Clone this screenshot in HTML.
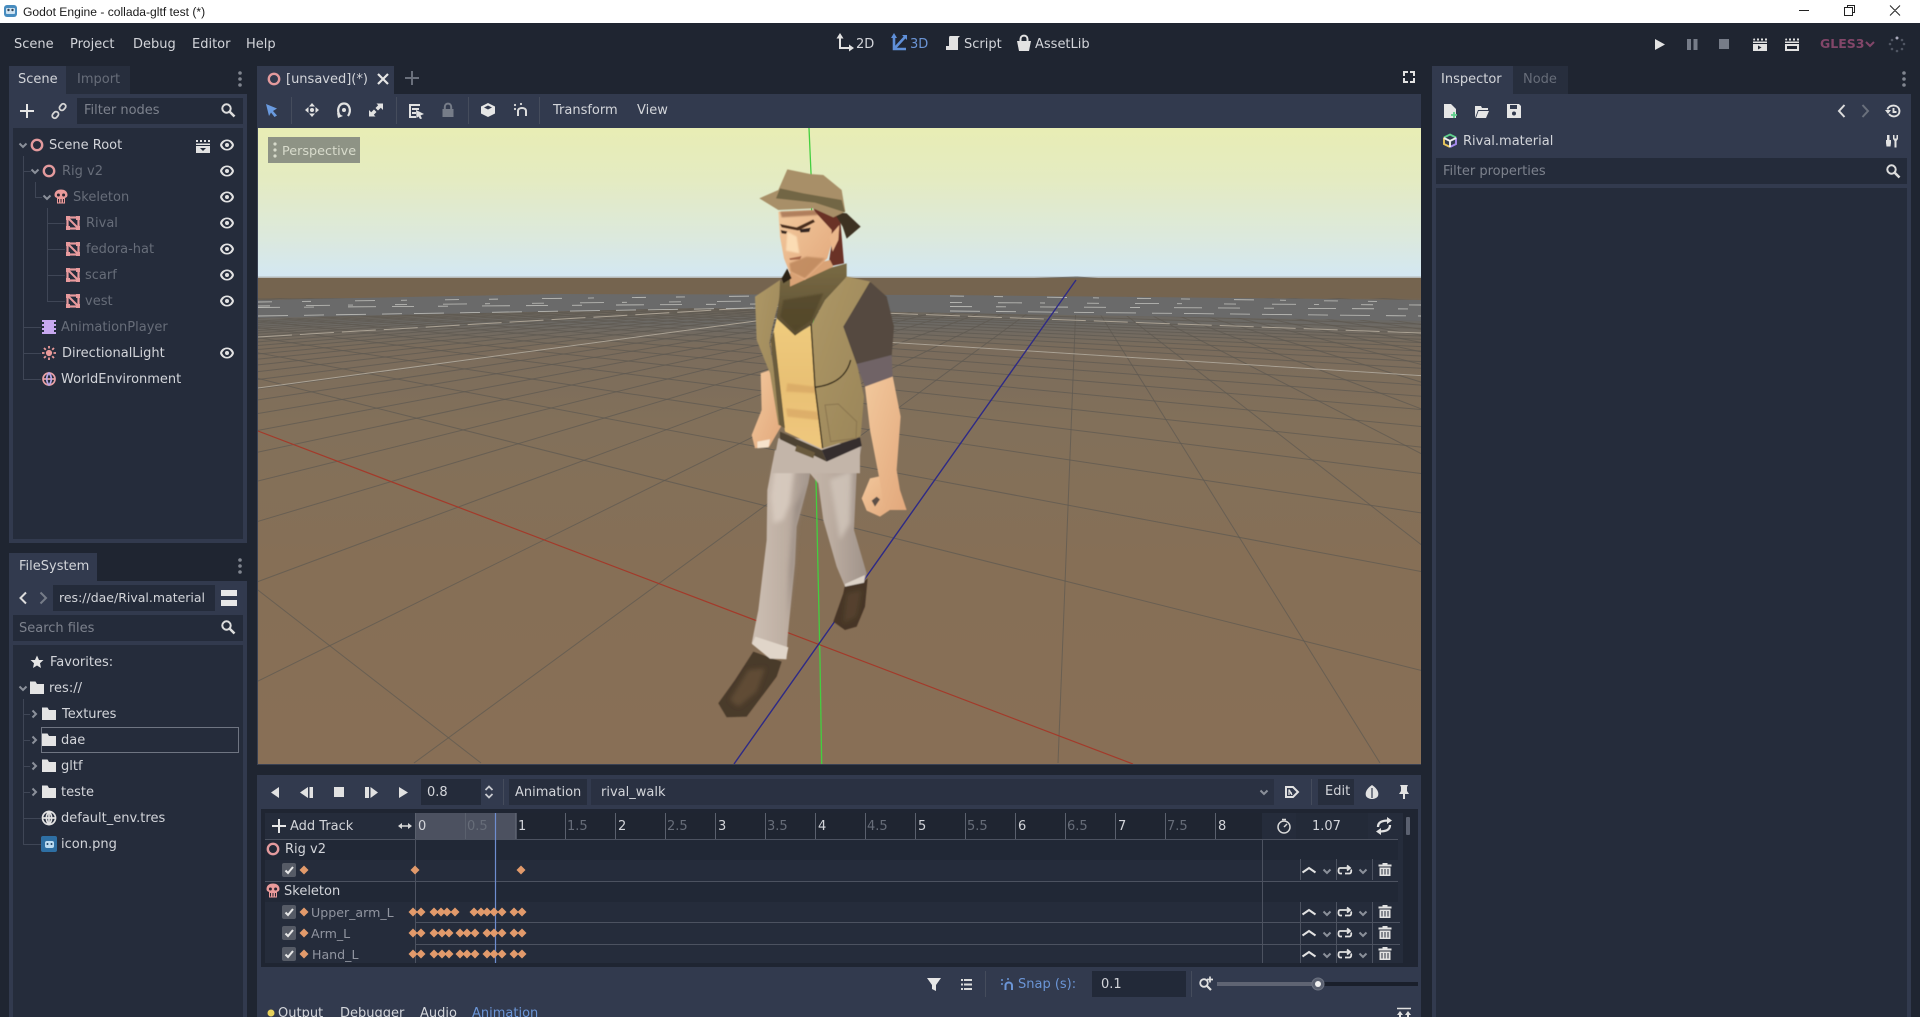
<!DOCTYPE html>
<html><head><meta charset="utf-8"><title>Godot Engine - collada-gltf test (*)</title>
<style>
html,body{margin:0;padding:0;width:1920px;height:1017px;overflow:hidden;background:#1f2531}
body{position:relative;font-family:"DejaVu Sans","Liberation Sans",sans-serif;font-size:13px;color:#d3d5da}
.b{position:absolute}
.t{position:absolute;white-space:nowrap;line-height:20px;height:20px;margin-top:1px}
.d{color:#676d79}
.p{color:#7d828d}
.h{color:#6b95d6}
svg{position:absolute;left:0;top:0}
</style></head><body>

<div class="b" style="left:0;top:0;width:1920px;height:23px;background:#fff"></div>
<span class="t" style="left:23px;top:1px;color:#1a1a1a;font-family:'Liberation Sans',sans-serif;font-size:12.1px">Godot Engine - collada-gltf test (*)</span>

<!-- left docks -->
<div class="b" style="left:9px;top:66px;width:57px;height:28px;background:#323a4e"></div>
<div class="b" style="left:66px;top:66px;width:64px;height:28px;background:#272e3d"></div>
<div class="b" style="left:9px;top:94px;width:238px;height:449px;background:#323a4e"></div>
<div class="b" style="left:77px;top:98px;width:166px;height:26px;background:#242b3a"></div>
<div class="b" style="left:13px;top:128px;width:230px;height:411px;background:#252c3b"></div>
<div class="b" style="left:9px;top:553px;width:88px;height:28px;background:#323a4e"></div>
<div class="b" style="left:9px;top:581px;width:238px;height:436px;background:#323a4e"></div>
<div class="b" style="left:53px;top:585px;width:162px;height:26px;background:#242b3a"></div>
<div class="b" style="left:13px;top:615px;width:230px;height:26px;background:#242b3a"></div>
<div class="b" style="left:13px;top:645px;width:230px;height:372px;background:#252c3b"></div>
<div class="b" style="left:41px;top:727px;width:196px;height:24px;border:1px solid #6f7582"></div>

<!-- center -->
<div class="b" style="left:257px;top:66px;width:137px;height:28px;background:#323a4e"></div>
<div class="b" style="left:257px;top:94px;width:1164px;height:34px;background:#323a4e"></div>
<div class="b" style="left:257px;top:128px;width:1164px;height:637px;background:#3a4152"></div>
<div class="b" style="left:257px;top:775px;width:1164px;height:242px;background:#323a4e"></div>
<div class="b" style="left:421px;top:779px;width:60px;height:26px;background:#242b3a"></div>
<div class="b" style="left:509px;top:779px;width:78px;height:26px;background:#272e3d"></div>
<div class="b" style="left:591px;top:779px;width:683px;height:26px;background:#2a3142"></div>
<div class="b" style="left:1318px;top:779px;width:36px;height:26px;background:#272e3d"></div>
<div class="b" style="left:261px;top:809px;width:1157px;height:158px;background:#1f2532"></div>
<div class="b" style="left:265px;top:813px;width:1138px;height:150px;background:#252c3b"></div>
<div class="b" style="left:415px;top:813px;width:847px;height:26px;background:#1f2531"></div>
<div class="b" style="left:415px;top:813px;width:102px;height:26px;background:#4c5160"></div>
<div class="b" style="left:265px;top:840px;width:1133px;height:20px;background:#212836"></div>
<div class="b" style="left:265px;top:882px;width:1133px;height:20px;background:#212836"></div>
<div class="b" style="left:1296px;top:813px;width:72px;height:26px;background:#232a38"></div>
<div class="b" style="left:1092px;top:971px;width:94px;height:26px;background:#222938"></div>

<!-- inspector -->
<div class="b" style="left:1432px;top:66px;width:81px;height:28px;background:#323a4e"></div>
<div class="b" style="left:1513px;top:66px;width:55px;height:28px;background:#272e3d"></div>
<div class="b" style="left:1432px;top:94px;width:479px;height:923px;background:#323a4e"></div>
<div class="b" style="left:1436px;top:158px;width:471px;height:26px;background:#242b3a"></div>
<div class="b" style="left:1436px;top:188px;width:471px;height:829px;background:#252c3b"></div>

<!-- 3D viewport -->
<svg width="1163" height="636" viewBox="258 128 1163 636" style="left:258px;top:128px">
<defs>
<linearGradient id="sky" x1="0" y1="0" x2="0" y2="1"><stop offset="0" stop-color="#e8edb4"/><stop offset=".35" stop-color="#e4ebc2"/><stop offset=".72" stop-color="#dce9dc"/><stop offset="1" stop-color="#d3e7f3"/></linearGradient>
<linearGradient id="gnd" x1="0" y1="0" x2="0" y2="1"><stop offset="0" stop-color="#75644f"/><stop offset=".035" stop-color="#75644f"/><stop offset=".09" stop-color="#6b6965"/><stop offset=".14" stop-color="#7a6c5c"/><stop offset=".3" stop-color="#82705a"/><stop offset=".6" stop-color="#866f56"/><stop offset="1" stop-color="#886f56"/></linearGradient>
<linearGradient id="skin" x1="0" y1="0" x2="1" y2="1"><stop offset="0" stop-color="#f2c89c"/><stop offset="1" stop-color="#e2a87c"/></linearGradient>
<linearGradient id="chest" x1="0" y1="0" x2="0" y2="1"><stop offset="0" stop-color="#efcc7e"/><stop offset=".5" stop-color="#e8c074"/><stop offset="1" stop-color="#f0c87e"/></linearGradient>
<linearGradient id="pant" x1="0" y1="0" x2="1" y2="0"><stop offset="0" stop-color="#cdbfb3"/><stop offset=".55" stop-color="#bdaea2"/><stop offset="1" stop-color="#a0938a"/></linearGradient>
<linearGradient id="vest" x1="0" y1="0" x2="1" y2="1"><stop offset="0" stop-color="#ad9766"/><stop offset="1" stop-color="#9a8558"/></linearGradient>
<linearGradient id="scarf" x1="0" y1="0" x2="0" y2="1"><stop offset="0" stop-color="#7a6b45"/><stop offset="1" stop-color="#5a4d30"/></linearGradient>
<filter id="s" x="-5%" y="-5%" width="110%" height="110%"><feGaussianBlur stdDeviation=".55"/></filter>
<filter id="s6" x="-40%" y="-40%" width="180%" height="180%"><feGaussianBlur stdDeviation="7"/></filter>
<filter id="s3" x="-40%" y="-40%" width="180%" height="180%"><feGaussianBlur stdDeviation="2.5"/></filter>
</defs>
<rect x="258" y="128" width="1163" height="150" fill="url(#sky)"/>
<rect x="258" y="278" width="1163" height="486" fill="url(#gnd)"/>
<rect x="258" y="276.5" width="1163" height="1.6" fill="#b5b8b8"/>
<!-- grid: family A -->
<path fill="none" stroke="#5f5a52" stroke-width="1" opacity=".75" d="M1077 277L1058 763M1077 277L1380 763M1077 277L1702 763M1077 277L2024 763M1077 277L2346 763M1077 277L2668 763M1077 277L2990 763M1077 277L3312 763M1077 277L3634 763M1077 277L3956 763M1077 277L4278 763M1077 277L4600 763M1077 277L5000 763M1077 277L5500 763M1077 277L6000 763M1077 277L7000 763M1077 277L8000 763M1077 277L414 763M1077 277L92 763M1077 277L-230 763M1077 277L-552 763M1077 277L-874 763M1077 277L-1196 763M1077 277L-1518 763M1077 277L-1840 763M1077 277L-2162 763M1077 277L-2484 763M1077 277L-2806 763M1077 277L-3128 763M1077 277L-3450 763M1077 277L-3772 763M1077 277L-4094 763M1077 277L-4416 763M1077 277L-4738 763M1077 277L-5060 763M1077 277L-5382 763M1077 277L-5704 763M1077 277L-6026 763M1077 277L-6348 763M1077 277L-6670 763M1077 277L-6992 763M1077 277L-7314 763M1077 277L-7636 763M1077 277L-7958 763M1077 277L-8600 763M1077 277L-9244 763M1077 277L-10000 763M1077 277L-11000 763M1077 277L-12500 763"/>
<!-- grid: family B -->
<path fill="none" stroke="#5f5a52" stroke-width="1" opacity=".75" d="M-146 277L481 763M-146 277L1790 763M-146 277L2440 763M-146 277L3083 763M-146 277L3730 763M-146 277L4330 763M-146 277L4950 763M-146 277L5600 763M-146 277L6240 763M-146 277L6900 763M-146 277L7574 763M-146 277L8200 763M-146 277L8850 763M-146 277L9500 763M-146 277L10150 763M-146 277L10800 763M-146 277L11450 763M-146 277L12100 763M-146 277L12750 763M-146 277L13400 763M-146 277L14700 763M-146 277L16000 763M-146 277L17300 763M-146 277L18600 763M-146 277L20000 763M-146 277L22000 763"/>
<!-- top bands cover the converging grid -->
<rect x="258" y="278" width="1163" height="20" fill="#75644f"/>
<polygon points="258,300 558,294 950,295 1421,300 1421,321 950,313 700,308 258,318" fill="#6a6a6a"/>
<!-- lighter major lines -->
<path fill="none" stroke="#aca395" stroke-width="1" d="M258 388L800 315M800 336.600L1421 375.600"/>
<path fill="none" stroke="#aca395" stroke-width="1" stroke-dasharray="34 8" d="M258 337L800 305M800 310L1421 333"/>
<path fill="none" stroke="#b6b6b2" stroke-width=".9" stroke-dasharray="14 30 9 44 20 26 6 38" d="M258 302L760 296M950 296L1421 302"/>
<path fill="none" stroke="#b6b6b2" stroke-width=".9" stroke-dasharray="12 36 24 18 5 42" d="M258 306L760 301M950 302.500L1421 305"/>
<path fill="none" stroke="#b6b6b2" stroke-width=".9" stroke-dasharray="22 24 10 34 28 16" d="M258 307.500L760 304M950 306.500L1421 309"/>
<path fill="none" stroke="#b6b6b2" stroke-width=".9" stroke-dasharray="30 16 20 12" d="M258 316L760 308M950 311L1421 316"/>
<!-- axes -->
<path fill="none" stroke="#43cf3f" stroke-width="1.300" d="M809 128L811 173L816 480L820 660L821.700 764"/>
<path fill="none" stroke="#a33a2a" stroke-width="1.200" d="M258 431L1133 764"/>
<path fill="none" stroke="#2e2a86" stroke-width="1.400" d="M1076 280L734 764"/>

<!-- character -->
<g filter="url(#s)">
<g transform="translate(680 440) scale(.3333)">
<path fill="#4a3a2a" d="M220 635L305 665L290 710L200 830L140 832L115 790L165 720Z"/>
<path fill="#6b543a" opacity=".7" filter="url(#s6)" d="M205 690L255 685L230 755L175 800L150 780Z"/>
<path fill="#463626" d="M495 435L550 425L563 415L555 500L530 560L495 570L460 545L490 460Z"/>
<path fill="#5e4a34" opacity=".6" filter="url(#s6)" d="M500 460L545 450L530 530L490 550Z"/>
<path fill="url(#pant)" d="M310 -10L545 20L530 100L522 270L560 400L552 428L495 440L470 380L430 240L415 130L390 100Z"/>
<path fill="url(#pant)" d="M285 30L400 50L385 130L350 260L345 370L322 600L320 658L270 655L215 610L235 510L260 300L262 150Z"/>
<path fill="#e0d5c9" d="M226 590L325 622L318 658L270 656L216 612Z"/>
<path fill="#dbcfc3" opacity=".8" filter="url(#s6)" d="M285 70L345 75L330 190L310 240L280 250L272 170Z"/>
<path fill="#8f8279" opacity=".65" filter="url(#s6)" d="M345 200L380 130L350 260L342 390L325 540L328 390Z"/>
<path fill="#d3c7bc" opacity=".8" filter="url(#s6)" d="M450 120L515 90L510 250L480 300Z"/>
<path fill="#dcd2c7" d="M495 432L555 405L552 428L495 440Z"/>
<path fill="url(#skin)" d="M545 175L570 115L640 100L652 195L600 230L560 212Z"/>
<path fill="#5c5046" d="M575 182L590 170L600 178L585 200Z"/>
</g>
<g transform="translate(700 130) scale(.3333)">
<!-- right arm -->
<path fill="url(#skin)" d="M495 770L578 738L602 860L590 1020L600 1080L620 1140L555 1140L535 1030L510 900Z"/>
<!-- left arm -->
<path fill="url(#skin)" d="M182 730L210 720L243 890L208 950L165 955L155 915L185 840Z"/>
<path fill="#f7e3cc" d="M172 935L210 928L206 952L172 955Z"/>
<!-- pants top -->
<path fill="#c3b5a9" d="M235 925L480 945L480 1030L215 1030Z"/>
<!-- belt -->
<path fill="#4e4230" d="M240 905L365 960L380 995L240 928Z"/>
<path fill="#352e2e" d="M365 960L480 922L485 948L380 995Z"/>
<path fill="#6a5a3c" d="M290 945L345 968L340 985L285 963Z"/>
<!-- chest -->
<path fill="url(#chest)" d="M230 565L285 615L335 585L345 770L368 958L255 905L212 640Z"/>
<path fill="#d29e5e" opacity=".55" filter="url(#s3)" d="M262 760L345 770L348 790L258 785ZM258 835L352 845L356 870L262 860Z"/>
<!-- vest left -->
<path fill="url(#vest)" d="M165 500L240 450L240 500L215 600L208 640L252 890L235 885L210 730L170 630Z"/>
<path fill="#6b5c3c" d="M212 630L222 605L255 895L238 885Z"/>
<!-- vest right -->
<path fill="url(#vest)" d="M335 585L375 510L440 440L512 455L430 590L470 700L492 800L482 920L370 955L345 770Z"/>
<path fill="none" stroke="#2c2416" stroke-width="4" d="M333 580L345 770L368 955M345 772C400 765 440 740 452 690"/>
<path fill="none" stroke="#8a7550" stroke-width="3" d="M375 825L415 822L470 875L468 925L392 935Z"/>
<!-- sleeve -->
<path fill="#554a3f" d="M510 455L560 500L582 590L575 680L470 702L430 590Z"/>
<path fill="#6f6366" d="M470 702L575 675L578 740L495 770Z"/>
<!-- scarf -->
<path fill="url(#scarf)" d="M240 455L440 400L440 440L375 510L335 582L285 617L230 565L238 500Z"/>
<path fill="#4e4228" opacity=".6" filter="url(#s3)" d="M250 510L370 490L335 570L285 605L240 560Z"/>
<!-- hair back -->
<path fill="#6b3128" d="M340 235L420 260L432 400L385 410L395 340Z"/>
<!-- neck -->
<path fill="#d9a274" d="M270 420L390 390L400 410L270 470Z"/>
<path fill="#2c2418" d="M245 445L262 415L275 445L250 460Z"/>
<!-- face -->
<path fill="url(#skin)" d="M235 245L340 240L395 300L395 340L382 385L315 450L268 425L252 385L240 320Z"/>
<path fill="#c08a5f" opacity=".9" filter="url(#s3)" d="M268 400L320 380L375 385L315 445L272 425Z"/>
<path fill="#fbdcb4" filter="url(#s3)" d="M262 305L290 320L298 370L258 362Z"/>
<path fill="#4b2f1f" d="M240 282L290 292L340 268L345 276L295 302L245 292Z"/>
<path fill="#352820" d="M298 298L332 293L328 306L302 308Z"/>
<path fill="#3a2c22" d="M242 300L262 304L258 312L245 310Z"/>
<path fill="#a86a4c" d="M268 385L305 378L300 388L270 390Z"/>
<path fill="#eab68a" d="M388 320L418 285L415 330L398 365Z"/>
<path fill="#7d4a2e" opacity=".55" filter="url(#s3)" d="M240 245L345 240L355 255L245 262Z"/>
<!-- hat -->
<path fill="#3d3323" d="M400 245L440 250L482 290L440 326L428 290Z"/>
<path fill="#a88f68" d="M178 205L235 180L262 118L330 132L370 135L425 180L436 245L400 262L340 235L235 240Z"/>
<path fill="#726645" d="M228 205L240 175L310 190L425 210L435 247L345 218Z"/>
</g>
</g>

<!-- Perspective label -->
<rect x="268" y="137" width="92" height="26" fill="#8e9385"/>
<g fill="#d7dacb"><circle cx="275" cy="144" r="1.600"/><circle cx="275" cy="150" r="1.600"/><circle cx="275" cy="156" r="1.600"/></g>
<text x="282" y="155" font-family="DejaVu Sans" font-size="12.800" fill="#d8dbcc">Perspective</text>
</svg>

<!-- TEXT -->
<span class="t" style="left:14px;top:34px">Scene</span>
<span class="t" style="left:70px;top:34px">Project</span>
<span class="t" style="left:133px;top:34px">Debug</span>
<span class="t" style="left:192px;top:34px">Editor</span>
<span class="t" style="left:246px;top:34px">Help</span>
<span class="t" style="left:856px;top:34px">2D</span>
<span class="t h" style="left:910px;top:34px">3D</span>
<span class="t" style="left:964px;top:34px">Script</span>
<span class="t" style="left:1035px;top:34px">AssetLib</span>
<span class="t" style="left:1820px;top:33px;color:#824669;font-weight:bold;font-size:12.500px">GLES3</span>

<span class="t" style="left:18px;top:69px">Scene</span>
<span class="t d" style="left:77px;top:69px">Import</span>
<span class="t p" style="left:84px;top:100px">Filter nodes</span>
<span class="t" style="left:49px;top:135px">Scene Root</span>
<span class="t d" style="left:62px;top:161px">Rig v2</span>
<span class="t d" style="left:73px;top:187px">Skeleton</span>
<span class="t d" style="left:86px;top:213px">Rival</span>
<span class="t d" style="left:86px;top:239px">fedora-hat</span>
<span class="t d" style="left:85px;top:265px">scarf</span>
<span class="t d" style="left:85px;top:291px">vest</span>
<span class="t d" style="left:61px;top:317px">AnimationPlayer</span>
<span class="t" style="left:62px;top:343px">DirectionalLight</span>
<span class="t" style="left:61px;top:369px">WorldEnvironment</span>

<span class="t" style="left:19px;top:556px">FileSystem</span>
<span class="t" style="left:59px;top:587px;font-size:12.500px">res://dae/Rival.material</span>
<span class="t p" style="left:19px;top:618px">Search files</span>
<span class="t" style="left:50px;top:652px">Favorites:</span>
<span class="t" style="left:49px;top:678px">res://</span>
<span class="t" style="left:62px;top:704px">Textures</span>
<span class="t" style="left:61px;top:730px">dae</span>
<span class="t" style="left:61px;top:756px">gltf</span>
<span class="t" style="left:61px;top:782px">teste</span>
<span class="t" style="left:61px;top:808px">default_env.tres</span>
<span class="t" style="left:61px;top:834px">icon.png</span>

<span class="t" style="left:286px;top:69px">[unsaved](*)</span>
<span class="t" style="left:553px;top:100px">Transform</span>
<span class="t" style="left:637px;top:100px">View</span>

<span class="t" style="left:427px;top:782px">0.8</span>
<span class="t" style="left:515px;top:782px">Animation</span>
<span class="t" style="left:601px;top:782px">rival_walk</span>
<span class="t" style="left:1325px;top:781px">Edit</span>

<span class="t" style="left:290px;top:816px">Add Track</span>
<span class="t" style="left:418px;top:816px">0</span>
<span class="t d" style="left:467px;top:816px">0.5</span>
<span class="t" style="left:518px;top:816px">1</span>
<span class="t d" style="left:567px;top:816px">1.5</span>
<span class="t" style="left:618px;top:816px">2</span>
<span class="t d" style="left:667px;top:816px">2.5</span>
<span class="t" style="left:718px;top:816px">3</span>
<span class="t d" style="left:767px;top:816px">3.5</span>
<span class="t" style="left:818px;top:816px">4</span>
<span class="t d" style="left:867px;top:816px">4.5</span>
<span class="t" style="left:918px;top:816px">5</span>
<span class="t d" style="left:967px;top:816px">5.5</span>
<span class="t" style="left:1018px;top:816px">6</span>
<span class="t d" style="left:1067px;top:816px">6.5</span>
<span class="t" style="left:1118px;top:816px">7</span>
<span class="t d" style="left:1167px;top:816px">7.5</span>
<span class="t" style="left:1218px;top:816px">8</span>
<span class="t" style="left:1312px;top:816px">1.07</span>
<span class="t" style="left:285px;top:839px">Rig v2</span>
<span class="t" style="left:284px;top:881px">Skeleton</span>
<span class="t" style="left:311px;top:902px;color:#9195a0;font-size:12.600px">Upper_arm_L</span>
<span class="t" style="left:311px;top:923px;color:#9195a0;font-size:12.600px">Arm_L</span>
<span class="t" style="left:312px;top:944px;color:#9195a0;font-size:12.600px">Hand_L</span>

<span class="t h" style="left:1018px;top:974px">Snap (s):</span>
<span class="t" style="left:1101px;top:974px">0.1</span>
<span class="t" style="left:278px;top:1003px">Output</span>
<span class="t" style="left:340px;top:1003px">Debugger</span>
<span class="t" style="left:420px;top:1003px">Audio</span>
<span class="t h" style="left:472px;top:1003px">Animation</span>

<span class="t" style="left:1441px;top:69px">Inspector</span>
<span class="t d" style="left:1523px;top:69px">Node</span>
<span class="t" style="left:1463px;top:131px">Rival.material</span>
<span class="t p" style="left:1443px;top:161px">Filter properties</span>

<!-- ICONS + LINES -->
<svg width="1920" height="1017" viewBox="0 0 1920 1017">
<defs>
<g id="eye" fill="#e2e2e2"><path fill-rule="evenodd" d="M0-5.500C-3.800-5.500-6.400-3-7 0c.6 3 3.200 5.500 7 5.500S6.400 3 7 0C6.400-3 3.800-5.500 0-5.500zM0-3.900C2.300-3.900 3.900-2.200 4.900 0 3.900 2.200 2.300 3.900 0 3.900S-3.900 2.200-4.900 0C-3.900-2.200-2.300-3.900 0-3.900z"/><circle r="2"/></g>
<circle id="ring" r="5.200" fill="none" stroke="#e39a9d" stroke-width="2.400"/>
<g id="skull"><path fill="#ea9a9a" d="M-6.500-2C-6.500-6-3-7.500 0-7.500S6.500-6 6.500-2C6.500 0 5 .5 4 1V6.500H-4V1C-5 .5-6.500 0-6.500-2z"/><circle cx="-2.600" cy="-2" r="1.500" fill="#2a2430"/><circle cx="2.600" cy="-2" r="1.500" fill="#2a2430"/><path fill="none" stroke="#2a2430" stroke-width="1" d="M-2.500 2V5.500M0 2V5.500M2.500 2V5.500"/></g>
<g id="mesh" fill="none" stroke="#e89a9d"><rect x="-5.500" y="-5.500" width="11" height="11" stroke-width="2.200"/><path stroke-width="2" d="M-5 -5L5 5"/><path fill="#e89a9d" stroke="none" d="M-7-7h4v4h-4zM3-7h4v4h-4zM-7 3h4v4h-4zM3 3h4v4h-4z"/></g>
<path id="folder" fill="#e4e4e4" d="M-7-6.500h5.500l1.500 2.500H7V6H-7z"/>
<path id="chd" fill="none" stroke="#8b909a" stroke-width="2" d="M-3.500-1.500L0 2L3.500-1.500"/>
<path id="chr" fill="none" stroke="#8b909a" stroke-width="2" d="M-1.500-3.500L2 0L-1.500 3.500"/>
<g id="search" fill="none" stroke="#dcdcdc"><circle cx="-1.500" cy="-1.500" r="4.200" stroke-width="2"/><path stroke-width="2.600" d="M1.500 1.500L6.500 6.500"/></g>
<g id="dots" fill="#80858f"><circle cy="-6" r="1.800"/><circle r="1.800"/><circle cy="6" r="1.800"/></g>
<path id="k" fill="#e29a6b" d="M0-4.500L4.500 0L0 4.500L-4.500 0Z"/>
<g id="check"><rect x="-7" y="-7" width="14" height="14" rx="2" fill="#565b66"/><path fill="none" stroke="#e8e8e8" stroke-width="2" d="M-3.500 .5L-1 3L4-3"/></g>
<g id="trash" fill="#e2e2e2"><rect x="-6.500" y="-5.500" width="13" height="2"/><rect x="-2.500" y="-7" width="5" height="2"/><path fill-rule="evenodd" d="M-5.500-2.500h11V6h-11zM-3.500-1v5.500h1V-1zM-.500-1v5.500h1V-1zM2.500-1v5.500h1V-1z"/></g>
<path id="up" fill="none" stroke="#e2e2e2" stroke-width="2" d="M-6.500 2.500L0-2L6.500 2.500"/>
<g id="lp" fill="none" stroke="#e2e2e2" stroke-width="1.800"><path d="M-3 3.500H-5C-7 3.500-7-2-5-2H4M2 -4.500L5-2L2 .5"/><path d="M6 -.5C6.800 1 6 3.500 4.500 3.500H0"/></g>
</defs>

<!-- title bar -->
<rect x="4" y="5" width="13" height="12" rx="3" fill="#478cbf"/><rect x="6" y="8" width="9" height="6" rx="1" fill="#cfe3f2"/><circle cx="8.500" cy="10" r="1.200" fill="#345"/><circle cx="12.500" cy="10" r="1.200" fill="#345"/>
<path fill="none" stroke="#222" stroke-width="1" d="M1799 10.500H1809M1844.500 7.500H1852.500V15.500H1844.500ZM1847.500 7.500V5.500H1854.500V12.500H1852.500M1890 5.500L1900 15.500M1900 5.500L1890 15.500"/>

<!-- workspace -->
<path fill="none" stroke="#e0e0e0" stroke-width="2" d="M840 36V48H851"/><path fill="#e0e0e0" d="M836.500 38.500L840 33L843.500 38.500ZM849 44.500L854 48L849 51.500Z"/>
<path fill="none" stroke="#5f8fd8" stroke-width="2.600" d="M894 36V49L906 49M894 49L905 37"/><path fill="#5f8fd8" d="M891 38L894 33L897 38ZM902 35H907V40Z"/>
<path fill="#e2e2e2" d="M950 36H960L958 38V50H946V46H949V39C949 38 949 36 950 36Z"/>
<path fill="#e2e2e2" d="M1017 41H1031L1029 51H1019Z"/><path fill="none" stroke="#e2e2e2" stroke-width="2" d="M1020.500 42V39C1020.500 34.500 1027.500 34.500 1027.500 39V42"/>

<!-- play buttons -->
<path fill="#e2e2e2" d="M1655 39L1665 44.500L1655 50Z"/>
<path fill="#767c88" d="M1687 39h4v11h-4zM1693.500 39h4v11h-4zM1719 39h10v10h-10z"/>
<g fill="#e2e2e2"><path fill-rule="evenodd" d="M1753 44h14v7h-14zM1758 45.500v4l3.500-2z"/><path d="M1753 39l1.500-.8.8 1.800-1.500.8zM1757 38.500h2v2h-2zM1761 38.500h2v2h-2zM1765 38.500h2v2h-2z M1753 41.500H1767V43H1753Z"/>
<path fill-rule="evenodd" d="M1785 44h14v7h-14zM1787 46v3h10v-3z"/><path d="M1785 39l1.500-.8.8 1.800-1.500.8zM1789 38.500h2v2h-2zM1793 38.500h2v2h-2zM1797 38.500h2v2h-2zM1785 41.500H1799V43H1785Z"/></g>
<path fill="none" stroke="#824669" stroke-width="2" d="M1866 42L1870 46L1874 42"/>
<g fill="#4f5562"><circle cx="1897" cy="38" r="1.500" fill="#aab"/><circle cx="1902" cy="40" r="1.300"/><circle cx="1904" cy="44" r="1.300"/><circle cx="1902" cy="49" r="1.300"/><circle cx="1897" cy="51" r="1.300"/><circle cx="1892" cy="49" r="1.300"/><circle cx="1890" cy="44" r="1.300"/><circle cx="1892" cy="40" r="1.300"/></g>

<use href="#dots" x="240" y="79"/><use href="#dots" x="240" y="566"/><use href="#dots" x="1904" y="79"/>
<path stroke="#e6e6e6" stroke-width="2" d="M20 111H34M27 104V118"/>
<g fill="none" stroke="#d5d5d5" stroke-width="1.800"><rect x="-6" y="-2.500" width="7" height="5" rx="2.500" transform="translate(57 113) rotate(-50)"/><rect x="-1" y="-2.500" width="7" height="5" rx="2.500" transform="translate(61 109) rotate(-50)"/></g>
<use href="#search" x="228" y="110"/><use href="#search" x="228" y="627"/><use href="#search" x="1893" y="171"/>

<!-- scene tree lines -->
<path fill="none" stroke="#3f4656" stroke-width="1" d="M23.500 156V379.500H41M23.500 171.500H31M23.500 327.500H41M23.500 353.500H41M35.500 182V197.500H42M47.500 208V301.500H65M47.500 223.500H65M47.500 249.500H65M47.500 275.500H65"/>
<path fill="none" stroke="#3f4656" stroke-width="1" d="M23.500 699V844.500H41M23.500 714.500H30M23.500 740.500H30M23.500 766.500H30M23.500 792.500H30M23.500 818.500H41"/>
<use href="#chd" x="23" y="145"/><use href="#ring" x="37" y="145"/>
<use href="#chd" x="35" y="171"/><use href="#ring" x="49" y="171"/>
<use href="#chd" x="47" y="197"/><use href="#skull" x="61" y="197"/>
<use href="#mesh" x="73" y="223"/><use href="#mesh" x="73" y="249"/><use href="#mesh" x="73" y="275"/><use href="#mesh" x="73" y="301"/>
<path fill="#c7a8ef" d="M42 320H56V334H42Z"/><path fill="#252c3b" d="M42 322h2v2h-2zM42 326h2v2h-2zM42 330h2v2h-2zM54 322h2v2h-2zM54 326h2v2h-2zM54 330h2v2h-2z"/>
<g fill="none" stroke="#ea9a9a" stroke-width="1.800"><circle cx="49" cy="353" r="2.200" fill="#ea9a9a"/><path d="M49 346V348.500M49 357.500V360M42 353H44.500M53.500 353H56M44 348L45.800 349.800M52.200 356.200L54 358M54 348L52.200 349.800M45.800 356.200L44 358"/></g>
<g fill="none" stroke-width="1.700"><g stroke="#e8a0a5"><circle cx="49" cy="379" r="6"/><path d="M43 379H55"/></g><path stroke="#b8a7e8" d="M49 373C46 376 46 382 49 385C52 382 52 376 49 373Z"/></g>
<use href="#eye" x="227" y="145"/><use href="#eye" x="227" y="171"/><use href="#eye" x="227" y="197"/><use href="#eye" x="227" y="223"/><use href="#eye" x="227" y="249"/><use href="#eye" x="227" y="275"/><use href="#eye" x="227" y="301"/><use href="#eye" x="227" y="353"/>
<path fill="#e2e2e2" d="M196 146H210V153H196Z"/><path fill="#252c3b" d="M200 148H206L203 151Z"/><path fill="#e2e2e2" d="M196 140h2v2h-2zM200 140h2v2h-2zM204 140h2v2h-2zM208 140h2v2h-2zM196 143.500H210V145H196Z"/>

<!-- filesystem -->
<path fill="none" stroke="#dcdcdc" stroke-width="2" d="M26 592.500L20.500 598L26 603.500"/>
<path fill="none" stroke="#767c88" stroke-width="2" d="M40.500 592.500L46 598L40.500 603.500"/>
<path fill="#e8e8e8" d="M221 590H237V596H221ZM221 600H237V606H221Z"/>
<path fill="#e6e6e6" d="M37 655.500L39 660H43.500L40 663.200L41 668L37 665.500L33 668L34 663.200L30.500 660H35Z"/>
<use href="#chd" x="23" y="688"/><use href="#folder" x="37" y="688"/>
<use href="#chr" x="34" y="714"/><use href="#folder" x="49" y="714"/>
<use href="#chr" x="34" y="740"/><use href="#folder" x="49" y="740"/>
<use href="#chr" x="34" y="766"/><use href="#folder" x="49" y="766"/>
<use href="#chr" x="34" y="792"/><use href="#folder" x="49" y="792"/>
<g fill="none" stroke="#e2e2e2" stroke-width="1.700"><circle cx="49" cy="818" r="6.500"/><path d="M42.500 818H55.500M49 811.500V824.500"/><path d="M49 811.500C45.500 815 45.500 821 49 824.500C52.500 821 52.500 815 49 811.500Z"/></g>
<rect x="41" y="836" width="16" height="16" rx="2" fill="#2e6fa3"/><rect x="45" y="841" width="9" height="7" rx="2" fill="#bcdcf2"/><circle cx="47.500" cy="844" r="1" fill="#246"/><circle cx="51.500" cy="844" r="1" fill="#246"/>

<!-- scene tab -->
<use href="#ring" x="274" y="79"/>
<path stroke="#e6e6e6" stroke-width="2.200" d="M378 74L388 84M388 74L378 84"/>
<path stroke="#6a707c" stroke-width="2" d="M405 78H419M412 71V85"/>
<path fill="none" stroke="#e2e2e2" stroke-width="2" d="M1404 77V73H1408M1410 73H1414V77M1414 79V83H1410M1408 83H1404V79" transform="translate(0 -1)"/>

<!-- viewport toolbar -->
<path fill="#6a9be0" d="M266 104L277 108.500L273 111L277 115.500L274.500 117L271 112.500L269 116Z"/>
<path stroke="#454c5c" d="M291.500 97V124M396.500 97V124M468.500 97V124M539.500 97V124"/>
<g fill="#e2e2e2"><path d="M312 103L315 106.500H309ZM312 117L309 113.500H315ZM305 110L308.500 107V113ZM319 110L315.500 113V107Z"/><circle cx="312" cy="110" r="2"/></g>
<path fill="none" stroke="#e2e2e2" stroke-width="2.200" d="M340 116C336 110 339 103.500 344 103.500S352 110 348 116"/><circle cx="344" cy="110" r="2" fill="#e2e2e2"/><path fill="#e2e2e2" d="M337 113L343 116L338 118Z"/>
<g fill="#e2e2e2"><path d="M383 103.500V110L380.800 107.800L378 110.500L375.500 108L378.200 105.300L376.500 103.500Z"/><path d="M369 116.500V110L371.200 112.200L374 109.500L376.500 112L373.800 114.700L375.500 116.500Z"/></g>
<path fill="none" stroke="#e2e2e2" stroke-width="2" d="M420 105H410V117H416M412 109H419M412 113H416"/><path fill="#e2e2e2" d="M416 110L424 114L420.500 115.500L422 118.500L420 119L418.500 116.500L416.500 118Z"/>
<path fill="#767c88" d="M442.500 109H453.500V117H442.500Z"/><path fill="none" stroke="#767c88" stroke-width="2" d="M444.800 109V107C444.800 102.500 451.200 102.500 451.200 107V109"/>
<path fill="#e6e6e6" fill-rule="evenodd" d="M488 103L495 106.500V113.500L488 117L481 113.500V106.500ZM488 105.500L484 107.500L488 109.500L492 107.500Z"/>
<g fill="#dcdcdc"><circle cx="515" cy="105" r="1.100"/><circle cx="515" cy="109" r="1.100"/><circle cx="521" cy="104" r="1.100"/></g><path fill="none" stroke="#dcdcdc" stroke-width="2" d="M518 116V111C518 107 526 107 526 111V116"/>

<!-- anim toolbar -->
<path fill="#e2e2e2" d="M279 787V798L271 792.500ZM308 787V798L300 792.500ZM309.500 787H313V798H309.500ZM334 787H344V797H334ZM365 787H369V798H365ZM370.500 787L378 792.500L370.500 798ZM399 787L408 792.500L399 798Z"/>
<path fill="none" stroke="#c8cad0" stroke-width="1.800" d="M485.500 790L489 786.500L492.500 790M485.500 794L489 797.500L492.500 794"/>
<use href="#chd" x="1264" y="792"/>
<path stroke="#454c5c" d="M503.500 779V805M1311.500 779V805M1191.500 971V997M985.500 971V997"/>
<path fill="none" stroke="#e2e2e2" stroke-width="2" d="M1286 787H1293L1298 792L1293 797H1286Z"/><path fill="none" stroke="#e2e2e2" stroke-width="1.300" d="M1289 795V789.500L1292 795M1290 793H1292"/>
<path fill="#e2e2e2" d="M1372 785C1378 789 1379 793 1378 796C1377 798 1374 799 1372 799C1370 799 1367 798 1366 796C1365 793 1366 789 1372 785Z"/><path stroke="#323a4e" stroke-width="1.200" d="M1372 788V798"/>
<path fill="#e2e2e2" d="M1400 785H1408L1407 787V791L1409 794H1405V799H1403V794H1399L1401 791V787Z"/>

<!-- track editor -->
<path stroke="#e6e6e6" stroke-width="2" d="M272 826H286M279 819V833"/>
<path fill="none" stroke="#d8d8d8" stroke-width="1.500" d="M399 826H411"/><path fill="#d8d8d8" d="M402 823V829L398 826ZM408 823V829L412 826Z"/>
<path stroke="#5a606d" stroke-width="1" d="M415.500 813V839M465.500 813V839M515.500 813V839M565.500 813V839M615.500 813V839M665.500 813V839M715.500 813V839M765.500 813V839M815.500 813V839M865.500 813V839M915.500 813V839M965.500 813V839M1015.500 813V839M1065.500 813V839M1115.500 813V839M1165.500 813V839M1215.500 813V839"/>
<path stroke="#4c5260" stroke-width="1" d="M265 839.500H1398M265 881.500H1398M415 922.500H1400M415 944.500H1400M415.500 839V963M1262.500 839V963M1300.500 859V880M1336.500 859V880M1372.500 859V880M1300.500 902V963M1336.500 902V963M1372.500 902V963"/>
<path stroke="#6e8dcf" stroke-width="1.200" d="M495.500 813V963"/>
<rect x="1406" y="817" width="4" height="18" rx="1" fill="#5b6170"/>
<g fill="none" stroke="#d8d8d8" stroke-width="1.500"><circle cx="1284" cy="827" r="6"/><path d="M1282 819.500H1286M1284 827L1287 824"/></g>
<g fill="none" stroke="#e2e2e2" stroke-width="2.300"><path d="M1378 827C1378 822 1382 820.500 1389 820.500M1390 825C1390 830 1386 831.500 1379 831.500"/></g><path fill="#e2e2e2" d="M1387 817L1392 820.500L1387 824ZM1381 828L1376 831.500L1381 835Z"/>

<use href="#ring" x="273" y="849"/><use href="#skull" x="273" y="891"/>
<use href="#check" x="289" y="870"/><use href="#check" x="289" y="912"/><use href="#check" x="289" y="933"/><use href="#check" x="289" y="954"/>
<use href="#k" x="304" y="870"/><use href="#k" x="304" y="912"/><use href="#k" x="304" y="933"/><use href="#k" x="304" y="954"/>
<use href="#k" x="415" y="870"/><use href="#k" x="521" y="870"/>
<use href="#k" x="413" y="912"/><use href="#k" x="421" y="912"/><use href="#k" x="434" y="912"/><use href="#k" x="441" y="912"/><use href="#k" x="447" y="912"/><use href="#k" x="455" y="912"/><use href="#k" x="474" y="912"/><use href="#k" x="481" y="912"/><use href="#k" x="487" y="912"/><use href="#k" x="494" y="912"/><use href="#k" x="502" y="912"/><use href="#k" x="514" y="912"/><use href="#k" x="522" y="912"/>
<use href="#k" x="413" y="933"/><use href="#k" x="421" y="933"/><use href="#k" x="434" y="933"/><use href="#k" x="442" y="933"/><use href="#k" x="449" y="933"/><use href="#k" x="460" y="933"/><use href="#k" x="467" y="933"/><use href="#k" x="475" y="933"/><use href="#k" x="487" y="933"/><use href="#k" x="494" y="933"/><use href="#k" x="502" y="933"/><use href="#k" x="514" y="933"/><use href="#k" x="522" y="933"/>
<use href="#k" x="413" y="954"/><use href="#k" x="421" y="954"/><use href="#k" x="434" y="954"/><use href="#k" x="442" y="954"/><use href="#k" x="449" y="954"/><use href="#k" x="460" y="954"/><use href="#k" x="467" y="954"/><use href="#k" x="475" y="954"/><use href="#k" x="487" y="954"/><use href="#k" x="494" y="954"/><use href="#k" x="502" y="954"/><use href="#k" x="514" y="954"/><use href="#k" x="522" y="954"/>

<use href="#up" x="1309" y="870"/><use href="#chd" x="1327" y="871"/><use href="#lp" x="1345" y="870"/><use href="#chd" x="1363" y="871"/><use href="#trash" x="1385" y="870"/>
<use href="#up" x="1309" y="912"/><use href="#chd" x="1327" y="913"/><use href="#lp" x="1345" y="912"/><use href="#chd" x="1363" y="913"/><use href="#trash" x="1385" y="912"/>
<use href="#up" x="1309" y="933"/><use href="#chd" x="1327" y="934"/><use href="#lp" x="1345" y="933"/><use href="#chd" x="1363" y="934"/><use href="#trash" x="1385" y="933"/>
<use href="#up" x="1309" y="954"/><use href="#chd" x="1327" y="955"/><use href="#lp" x="1345" y="954"/><use href="#chd" x="1363" y="955"/><use href="#trash" x="1385" y="954"/>

<!-- bottom bar -->
<path fill="#e6e6e6" d="M927 978H941L936 985V991L932 989V985Z"/>
<path fill="#dcdcdc" d="M961 979h2v2h-2zM964 979h8v2h-8zM961 983.500h2v2h-2zM964 983.500h8v2h-8zM961 988h2v2h-2zM964 988h8v2h-8z"/>
<g fill="#6b95d6"><circle cx="1002" cy="980" r="1"/><circle cx="1002" cy="984" r="1"/><circle cx="1008" cy="979" r="1"/></g><path fill="none" stroke="#6b95d6" stroke-width="2" d="M1005.500 990V985.500C1005.500 981.500 1012 981.500 1012 985.500V990"/>
<g fill="none" stroke="#e0e0e0"><circle cx="1204" cy="983" r="3.800" stroke-width="1.800"/><path stroke-width="2.200" d="M1207 986L1211 990"/><path stroke-width="1.700" d="M1207 979.500H1213M1210 976.500V982.500"/></g>
<rect x="1217" y="982" width="101" height="4" fill="#5f6473"/><rect x="1318" y="982" width="100" height="4" fill="#1a1f2b"/>
<circle cx="1318" cy="984" r="6" fill="#5a6070" stroke="#6e7482" stroke-width="1"/><circle cx="1318" cy="984" r="3" fill="#f0f0f0"/>
<circle cx="271" cy="1013" r="3.500" fill="#e8d25c"/>
<path fill="none" stroke="#e0e0e0" stroke-width="1.500" d="M1397 1008.500H1411"/><path fill="#e0e0e0" d="M1400 1011L1403 1015H1397ZM1408 1011L1411 1015H1405ZM1399 1015h2v2h-2zM1407 1015h2v2h-2z"/>

<!-- inspector icons -->
<path fill="#e6e6e6" d="M1444 104H1451L1456 109V118H1444Z"/><path stroke="#5fd08c" stroke-width="1.800" d="M1451 115H1457M1454 112V118"/>
<path fill="#e6e6e6" d="M1475 106H1481L1482 108H1488V110H1478L1475 118Z"/><path fill="#e6e6e6" d="M1478.500 111H1489L1486 118H1476Z"/>
<path fill="#e6e6e6" fill-rule="evenodd" d="M1507 104H1519L1521 106V118H1507ZM1510 105V109H1517V105ZM1514 111.500A2 2 0 1 0 1514 115.500A2 2 0 1 0 1514 111.500Z"/>
<path fill="none" stroke="#dcdcdc" stroke-width="2" d="M1844.500 105L1839 111L1844.500 117"/>
<path fill="none" stroke="#6a707c" stroke-width="2" d="M1862.500 105L1868 111L1862.500 117"/>
<g fill="none" stroke="#e2e2e2" stroke-width="1.900"><path d="M1887.500 109.500C1889 104 1899 104 1899.500 111C1899.500 117 1892 118 1889 114"/><path d="M1893.500 108V112H1896.500"/></g><path fill="#e2e2e2" d="M1885 110H1891L1888 114Z"/>
<g fill="none" stroke-width="1.900"><path stroke="#5fd08c" d="M1444 137.500L1450 134.500L1456 137.500"/><path stroke="#e9c85e" d="M1444 137.500V144L1450 147"/><path stroke="#a88cf0" d="M1456 137.500V144L1450 147"/><path stroke="#eee" d="M1444 138L1450 141L1456 138M1450 141V147"/></g>
<path fill="#e2e2e2" d="M1887 135H1889.500V140H1891V143L1890.500 146.500H1886.500L1886 143V140H1887ZM1893 135H1894.500V138.500H1896.500V135H1898V139L1896.500 141V147.500H1894.500V141L1893 139Z"/>
</svg>
</body></html>
